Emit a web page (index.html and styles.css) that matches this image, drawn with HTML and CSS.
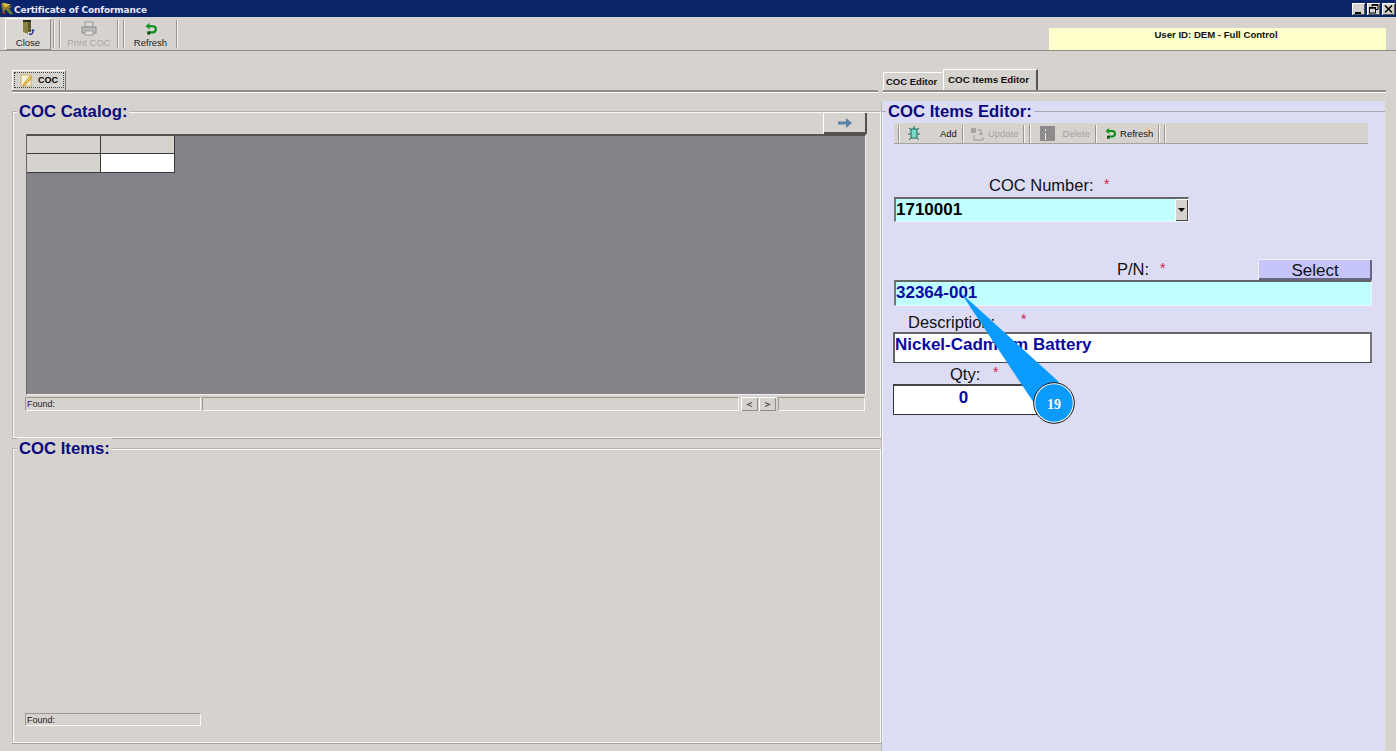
FILE: index.html
```html
<!DOCTYPE html>
<html lang="en">
<head>
<meta charset="utf-8">
<title>Certificate of Conformance</title>
<link rel="stylesheet" href="styles.css">
</head>
<body>
<div class="window">
  <header class="titlebar">
    <svg class="title-icon" width="14" height="15" viewBox="0 0 14 14"><path d="M1 2l11 3-3 2 4 5-3 1-4-5-3 3z" fill="#8a7a2a"/><path d="M2 1l9 2-6 3z" fill="#d8c040"/><path d="M1 10l5 1-2 2z" fill="#b03020"/><path d="M7 8l4 2-1 2z" fill="#3a8a3a"/></svg>
    <span class="title-text">Certificate of Conformance</span>
    <div class="win-btns">
      <span class="win-btn"><svg width="13" height="12" viewBox="0 0 13 12"><rect x="3" y="9" width="6" height="2" fill="#000"/></svg></span>
      <span class="win-btn"><svg width="13" height="12" viewBox="0 0 13 12"><path d="M5 1.500h6v5H9M5 1.500v2" fill="none" stroke="#000"/><path d="M5 2h6" stroke="#000" stroke-width="1.500"/><rect x="2.500" y="4.500" width="6" height="5.500" fill="none" stroke="#000"/><path d="M2 5h7" stroke="#000" stroke-width="1.500"/></svg></span>
      <span class="win-btn"><svg width="13" height="12" viewBox="0 0 13 12"><path d="M3 2.500l7 7M10 2.500l-7 7" stroke="#000" stroke-width="1.600"/></svg></span>
    </div>
  </header>

  <div class="toolbar">
    <div class="tool tool-raised">
      <svg width="16" height="17" viewBox="0 0 16 17"><path d="M3 1h8v12H3z" fill="#5a5a30"/><path d="M3 1l5 2v12l-5-2z" fill="#8a8040"/><path d="M3 1h8v2H3z" fill="#2a2a20"/><path d="M9 15c3 1 4-1 4-3" fill="none" stroke="#2030a0" stroke-width="1.400"/><path d="M11 12h4l-2-2z" fill="#2030a0"/></svg>
      <span>Close</span>
    </div>
    <i class="grip"></i><i class="grip"></i>
    <div class="tool tool-print tool-off">
      <svg width="16" height="15" viewBox="0 0 16 15"><rect x="4" y="1" width="8" height="5" fill="#d8d6d0" stroke="#999"/><rect x="1" y="6" width="14" height="6" fill="#bbb" stroke="#8c8c8c"/><rect x="4" y="10" width="8" height="4" fill="#e4e2dc" stroke="#999"/></svg>
      <span>Print COC</span>
    </div>
    <i class="grip"></i><i class="grip"></i>
    <div class="tool tool-refresh">
      <svg width="14" height="13" viewBox="0 0 14 14"><path d="M4 3.500h5a3 3 0 0 1 0 6.500H5" fill="none" stroke="#0a8a1a" stroke-width="2.400"/><path d="M1 3.500l4.500-3.500v7z" fill="#0a9a1a"/><path d="M3 9h3v3.500H3z" fill="#064a10"/></svg>
      <span>Refresh</span>
    </div>
    <i class="grip"></i>
    <div class="user-box">User ID: DEM - Full Control</div>
  </div>

  <div class="tabrow">
    <div class="tabs-left">
      <div class="tab-coc">
        <svg width="13" height="13" viewBox="0 0 13 13"><rect x="1" y="1" width="10" height="11" fill="#f8f4dc" stroke="#d4b060"/><path d="M4 9l6-7 2 1.500-6 7-3 1z" fill="#e8c050" stroke="#a88020" stroke-width=".5"/></svg>
        <span>COC</span>
      </div>
    </div>
    <div class="tabs-right">
      <span class="tab-a">COC Editor</span>
      <span class="tab-b">COC Items Editor</span>
    </div>
  </div>

  <div class="body">
    <div class="left">
      <fieldset class="group group-catalog">
        <legend>COC Catalog:</legend>
        <div class="arrow-row">
          <button class="arrow-btn" type="button"><svg width="16" height="10" viewBox="0 0 16 10"><path d="M1 3.500h8V0l6 5-6 5V6.500H1z" fill="#5a80a8"/></svg></button>
        </div>
        <div class="grid-area">
          <div class="cells">
            <i class="cell"></i><i class="cell"></i>
            <i class="cell"></i><i class="cell cell-white"></i>
          </div>
        </div>
        <div class="statusbar">
          <span class="stat stat-found">Found:</span>
          <span class="stat stat-mid"></span>
          <span class="pager"><svg width="7" height="7" viewBox="0 0 7 7"><path d="M6 1.500L1.500 3.500 6 5.500" fill="none" stroke="#555" stroke-width="1.200"/></svg></span>
          <span class="pager"><svg width="7" height="7" viewBox="0 0 7 7"><path d="M1 1.500l4.500 2L1 5.500" fill="none" stroke="#555" stroke-width="1.200"/></svg></span>
          <span class="stat stat-end"></span>
        </div>
      </fieldset>
      <fieldset class="group group-items">
        <legend>COC Items:</legend>
        <span class="stat stat-found stat-bottom">Found:</span>
      </fieldset>
    </div>

    <div class="right">
      <fieldset class="editor">
        <legend>COC Items Editor:</legend>
        <div class="ed-toolbar">
          <i class="grip"></i>
          <svg class="ed-add-icon" width="14" height="15" viewBox="0 0 14 15"><rect x="4" y="3" width="6" height="9" fill="#7ad8c8" stroke="#1a6a5a"/><path d="M2 2l2 2M12 2l-2 2M1 8h3M13 8h-3M2 14l2-2M12 14l-2-2M7 0v3" stroke="#1a6a5a"/></svg>
          <span class="ed-add">Add</span>
          <i class="grip"></i>
          <svg class="ed-up-icon" width="15" height="14" viewBox="0 0 15 14"><rect x="1" y="1" width="5" height="5" fill="#a5a5a5"/><path d="M8 3h3v5M9 7h4M4 8v5h9v-3" fill="none" stroke="#999"/></svg>
          <span class="ed-off ed-up">Update</span>
          <i class="grip"></i><i class="grip"></i>
          <svg class="ed-del-icon" width="15" height="15" viewBox="0 0 15 15"><rect width="15" height="15" fill="#8d8b8b"/><rect x="5" y="7" width="1" height="7" fill="#e8e8e8"/><rect x="5" y="3" width="1" height="2" fill="#e8e8e8"/></svg>
          <span class="ed-off ed-del">Delete</span>
          <i class="grip"></i>
          <svg class="ed-re-icon" width="13" height="12" viewBox="0 0 14 14"><path d="M4 3.500h5a3 3 0 0 1 0 6.500H5" fill="none" stroke="#0a8a1a" stroke-width="2.400"/><path d="M1 3.500l4.500-3.500v7z" fill="#0a9a1a"/><path d="M3 9h3v3.500H3z" fill="#064a10"/></svg>
          <span class="ed-re">Refresh</span>
          <i class="grip"></i><i class="grip"></i>
        </div>

        <div class="lbl lbl-num">COC Number:<b class="req req-num">*</b></div>
        <div class="combo">
          <span>1710001</span>
          <span class="combo-btn"><svg width="7" height="4" viewBox="0 0 7 4"><path d="M0 0h7L3.500 4z" fill="#000"/></svg></span>
        </div>

        <div class="pn-head">
          <div class="lbl lbl-pn">P/N:<b class="req req-pn">*</b></div>
          <button class="select-btn" type="button">Select</button>
        </div>
        <div class="input input-pn">32364-001</div>

        <div class="lbl lbl-desc">Description:<b class="req req-desc">*</b></div>
        <div class="input input-desc">Nickel-Cadmium Battery</div>

        <div class="lbl lbl-qty">Qty:<b class="req req-qty">*</b></div>
        <div class="input input-qty">0</div>
      </fieldset>
    </div>
  </div>
</div>

<svg class="callout" width="140" height="145" viewBox="0 0 140 145">
  <path d="M1 1L99 90 74 111z" fill="#0a9bfc"/>
  <circle cx="94" cy="111" r="19.500" fill="#0a9bfc" stroke="#fff" stroke-width="1.500"/>
  <circle cx="94" cy="111" r="20.300" fill="none" stroke="#111" stroke-width="1"/>
</svg>
<span class="callout-num">19</span>
</body>
</html>
```

FILE: styles.css
```css
* { box-sizing: border-box; }
html, body { margin: 0; padding: 0; }
body {
  width: 1396px;
  height: 751px;
  overflow: hidden;
  position: relative;
  background: #d6d3ce;
  font-family: "Liberation Sans", Arial, sans-serif;
  color: #000;
}
.window { width: 1396px; height: 751px; display: flex; flex-direction: column; }

/* title bar */
.titlebar {
  height: 17px;
  flex: none;
  display: flex;
  align-items: center;
  background: #0a246a;
  color: #e8e8f4;
}
.title-icon { flex: none; }
.title-text {
  font-family: "DejaVu Sans", sans-serif;
  font-weight: bold;
  font-size: 9px;
  letter-spacing: -0.15px;
  padding-top: 2px;
}
.win-btns { margin-left: auto; display: flex; gap: 2px; padding-right: 1px; padding-top: 1px; }
.win-btn {
  width: 13px;
  height: 12px;
  background: #d6d3ce;
  display: block;
  box-shadow: inset 1px 1px 0 #fff, inset -1px -1px 0 #555;
}
.win-btn svg { display: block; }

/* main toolbar */
.toolbar {
  height: 34px;
  flex: none;
  display: flex;
  align-items: stretch;
  padding: 1px 0 0 5px;
  border-bottom: 1px solid #8f8d88;
  position: relative;
}
.tool {
  width: 46px;
  height: 32px;
  display: flex;
  flex-direction: column;
  align-items: center;
  justify-content: flex-end;
  font-family: "Liberation Sans", sans-serif;
  font-size: 9.500px;
  color: #1c1c1c;
  padding-bottom: 2px;
  flex: none;
}
.tool svg { margin-bottom: 1px; }
.tool-raised { box-shadow: inset 1px 1px 0 #fff, inset -1px -1px 0 #8f8d88; background: #dad7d2; }
.tool-print { width: 52px; }
.tool-refresh { width: 47px; }
.tool-off { color: #a8a6a2; }
.grip {
  width: 2px;
  height: 28px;
  margin: 2px 2px 0;
  border-left: 1px solid #99968f;
  border-right: 1px solid #f6f5f2;
  flex: none;
  display: block;
}
.user-box {
  position: absolute;
  left: 1049px;
  top: 11px;
  width: 337px;
  height: 22px;
  background: #ffffcc;
  font-family: "Liberation Sans", sans-serif;
  font-weight: bold;
  font-size: 9.600px;
  text-align: center;
  padding-top: 1px;
  padding-right: 3px;
  color: #111;
}

/* tab row */
.tabrow {
  height: 41px;
  flex: none;
  display: flex;
  padding-top: 19px;
}
.tabs-left {
  margin-left: 12px;
  width: 866px;
  height: 22px;
  border-bottom: 2px solid #8f8d88;
  box-shadow: 0 1px 0 #fff;
}
.tab-coc {
  width: 54px;
  height: 20px;
  display: flex;
  align-items: center;
  gap: 5px;
  padding: 0 0 1px 7px;
  background: #d6d3ce;
  border-top: 1px solid #fff;
  border-left: 1px solid #fff;
  border-right: 1px solid #77756f;
  outline: 1px dotted #444;
  outline-offset: -3px;
  font-size: 9px;
  font-weight: bold;
}
.tabs-right {
  margin-left: 5px;
  width: 503px;
  height: 22px;
  border-bottom: 2px solid #8f8d88;
  box-shadow: 0 1px 0 #fff;
  display: flex;
  align-items: flex-end;
  font-size: 9.500px;
  font-weight: bold;
  color: #111;
}
.tab-a {
  width: 60px;
  height: 18px;
  padding: 3px 0 0 2px;
  border-top: 1px solid #fff;
  border-left: 1px solid #fff;
}
.tab-b {
  width: 95px;
  height: 21px;
  padding: 4px 0 0 4px;
  font-size: 9.800px;
  border-top: 1px solid #fff;
  border-left: 1px solid #fff;
  border-right: 2px solid #55534e;
}

/* body */
.body { flex: 1; display: flex; min-height: 0; padding-left: 12px; }
.left { width: 869px; flex: none; padding-top: 9px; }
.right {
  width: 504px;
  flex: none;
  margin-top: 9px;
  background: #dcdcf5;
  border-left: 1px solid #b9b7b2;
}

fieldset {
  margin: 0;
  padding: 0;
  min-width: 0;
  position: relative;
}
legend {
  font-family: "Liberation Sans", Arial, sans-serif;
  font-weight: bold;
  font-size: 16.700px;
  line-height: 18px;
  color: #0a0a80;
  padding: 2px 2px 0;
  margin-left: -9px;
  background: #d6d3ce;
}
.group {
  width: 869px;
  border: 1px solid #f8f7f4;
  box-shadow: inset 1px 1px 0 #f8f7f4, 0 1px 0 #a5a39e;
  border-width: 0 1px 1px 0;
  border-top: 1px solid #b5b3ae;
  border-left: 1px solid #b5b3ae;
}
.group-catalog { height: 337px; padding: 0 14px 0 13px; }
.group-items { height: 305px; padding: 0 0 0 12px; }
.group-items legend { margin-left: -8px; }

.arrow-row { height: 21px; display: flex; justify-content: flex-end; margin-right: -1px; margin-top: -8px; }
.arrow-btn {
  width: 44px;
  height: 22px;
  padding: 0;
  background: #d6d3ce;
  border: 0;
  box-shadow: inset 1px 1px 0 #fff, inset -2px -2px 0 #55534e;
  display: flex;
  align-items: center;
  justify-content: center;
  margin-top: -1px;
}
.grid-area {
  width: 840px;
  height: 261px;
  background: #85838a;
  border-top: 2px solid #55534e;
  border-left: 1px solid #6a6866;
  border-right: 1px solid #f0efec;
  border-bottom: 1px solid #f0efec;
}
.cells {
  display: grid;
  grid-template-columns: 74px 74px;
  grid-template-rows: 18px 19px;
  width: 148px;
}
.cell {
  display: block;
  background: #d6d3ce;
  border-right: 1px solid #3a3a3a;
  border-bottom: 1px solid #3a3a3a;
}
.cell-white { background: #fff; }
.statusbar {
  display: flex;
  align-items: stretch;
  height: 15px;
  margin-top: 2px;
  margin-left: -1px;
  width: 841px;
  gap: 1px;
}
.stat {
  display: block;
  height: 14px;
  border-top: 1px solid #9a9893;
  border-left: 1px solid #9a9893;
  border-bottom: 1px solid #f8f7f4;
  border-right: 1px solid #f8f7f4;
  font-size: 9px;
  line-height: 12px;
  padding-left: 1px;
  color: #222;
}
.stat-found { width: 176px; }
.stat-mid { width: 537px; margin-right: 1px; }
.stat-end { width: 87px; margin-left: 1px; }
.stat-bottom { margin-top: 255px; height: 13px; }
.pager {
  width: 17px;
  height: 14px;
  display: flex;
  align-items: center;
  justify-content: center;
  box-shadow: inset 1px 1px 0 #fff, inset -1px -1px 0 #8f8d88;
}

/* editor */
.editor {
  border: 0;
  border-top: 1px solid #a9a9b4;
  height: 640px;
  padding: 0 0 0 12px;
  box-shadow: inset 1px 0 0 #f4f4fc;
}
.editor legend { margin-left: -8px; background: #dcdcf5; }
.ed-toolbar {
  width: 474px;
  height: 21px;
  margin-top: 2px;
  background: #d6d3ce;
  display: flex;
  align-items: center;
  font-size: 9.500px;
  color: #111;
  padding-left: 2px;
  box-shadow: inset 0 -1px 0 #a5a39e;
}
.ed-toolbar .grip { height: 18px; margin: 0 2px; }
.ed-add-icon { margin-left: 5px; }
.ed-add { margin-left: 19px; margin-right: 3px; }
.ed-up-icon { margin-left: 4px; }
.ed-up { margin-left: 3px; margin-right: 2px; }
.ed-del-icon { margin-left: 7px; }
.ed-del { margin-left: 8px; margin-right: 3px; }
.ed-re-icon { margin-left: 5px; }
.ed-re { margin-left: 3px; margin-right: 3px; }
.ed-off { color: #a5a39f; }

.lbl { font-size: 16.500px; line-height: 16px; color: #111; position: relative; }
.req {
  position: absolute;
  font-weight: normal;
  font-size: 14px;
  line-height: 14px;
  color: #d02040;
}
.lbl-num { margin: 33px 0 0 95px; width: 180px; }
.req-num { left: 115px; top: 0; }
.combo {
  width: 295px;
  height: 25px;
  margin-top: 4px;
  background: #c0ffff;
  border-top: 2px solid #666;
  border-left: 2px solid #777;
  border-bottom: 1px solid #f4f4fc;
  border-right: 1px solid #f4f4fc;
  display: flex;
  align-items: center;
  justify-content: space-between;
  font-weight: bold;
  font-size: 17px;
  padding-bottom: 0;
}
.combo-btn {
  width: 13px;
  height: 22px;
  background: #d6d3ce;
  display: flex;
  align-items: center;
  justify-content: center;
  box-shadow: inset 1px 1px 0 #fff, inset -1px -1px 0 #444;
}
.pn-head { display: flex; align-items: flex-end; width: 478px; height: 21px; margin-top: 37px; }
.lbl-pn { margin: 0 0 3px 223px; }
.req-pn { left: 43px; top: 0; }
.select-btn {
  margin-left: auto;
  width: 114px;
  height: 21px;
  padding: 2px 0 0;
  border: 0;
  background: #c5c5fa;
  box-shadow: inset 1px 1px 0 #f0f0ff, inset -2px -2px 0 #666680;
  font-family: "Liberation Sans", sans-serif;
  font-size: 17px;
  color: #111;
}
.input {
  font-weight: bold;
  font-size: 17px;
  color: #0a0aa0;
  display: flex;
  align-items: center;
}
.input-pn {
  width: 478px;
  height: 26px;
  background: #c0ffff;
  border-top: 2px solid #666;
  border-left: 2px solid #777;
  border-bottom: 1px solid #f4f4fc;
  border-right: 1px solid #f4f4fc;
  padding-bottom: 1px;
}
.lbl-desc { margin: 8px 0 0 14px; width: 150px; }
.req-desc { left: 113px; top: -2px; }
.input-desc {
  width: 479px;
  height: 31px;
  margin: 2px 0 0 -1px;
  background: #fff;
  border: 1px solid #555;
  border-width: 2px 2px 1px 2px;
  border-color: #666 #777 #444 #666;
  padding-bottom: 6px;
}
.lbl-qty { margin: 3px 0 0 56px; width: 80px; }
.req-qty { left: 43px; top: -1px; }
.input-qty {
  width: 144px;
  height: 31px;
  margin: 2px 0 0 -1px;
  background: #fff;
  border: 1px solid #333;
  border-top: 2px solid #444;
  justify-content: center;
  padding: 0 3px 5px 0;
}

/* callout overlay */
.callout { position: absolute; left: 960px; top: 292px; overflow: visible; }
.callout-num {
  position: absolute;
  left: 1044px;
  top: 397px;
  width: 20px;
  text-align: center;
  font-family: "Liberation Serif", serif;
  font-weight: bold;
  font-size: 14px;
  line-height: 15px;
  color: #fff;
}
```
